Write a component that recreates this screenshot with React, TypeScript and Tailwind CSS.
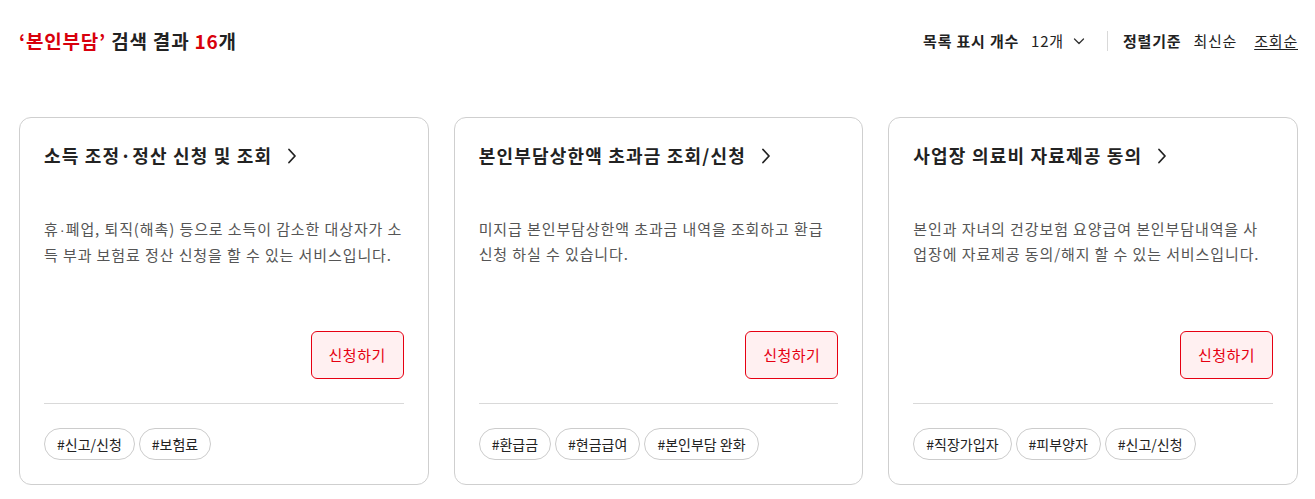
import React from 'react';

const font = { fontFamily: '"Noto Sans CJK KR", "Noto Sans", sans-serif' };

interface ServiceCardProps {
    title: string;
    desc: string[]; // lines, wrapped as on the live page
    tags: string[];
}

// the CJK font draws a full-width middle dot, so give it a latin one
const withDots = (text: string) =>
    text.split('·').map((part, i) => (
        <React.Fragment key={i}>
            {i > 0 && <span className="font-['Liberation_Sans'] tracking-normal px-[1px]">·</span>}
            {part}
        </React.Fragment>
    ));

const ServiceCard: React.FC<ServiceCardProps> = ({ title, desc, tags }) => {
    return (
        <div className="flex flex-col h-[368px] border border-[#cfcfcf] rounded-xl bg-white px-6 pt-6 pb-6">
            <h3 className="flex items-center text-[18px] leading-[27px] font-bold text-[#222] tracking-[1.2px]">
                {title}
                <svg className="ml-[13px]" width="14" height="16" viewBox="0 0 14 16" fill="none">
                    <path d="M4 1.5 L10 8 L4 14.5" stroke="#222" strokeWidth="1.8" strokeLinecap="round" strokeLinejoin="round" />
                </svg>
            </h3>
            <p className="mt-[47px] flex-1 text-[15px] leading-[25px] text-[#555] tracking-[0.9px]">
                {desc.map((line, i) => (
                    <span key={i} className="block whitespace-nowrap">
                        {withDots(line)}
                    </span>
                ))}
            </p>
            <div className="flex justify-end">
                <button className="w-[93px] h-[48px] rounded-md border border-[#e60012] bg-[#fff0f1] text-[15px] text-[#e60012] tracking-[0.5px]">
                    신청하기
                </button>
            </div>
            <div className="mt-6 border-t border-[#d9d9d9] pt-6 flex gap-1">
                {tags.map((t) => (
                    <span key={t} className="h-8 px-3 flex items-center rounded-full border border-[#cccccc] text-[14px] text-[#222]">
                        #{t}
                    </span>
                ))}
            </div>
        </div>
    );
};

const cards: ServiceCardProps[] = [
    {
        title: '소득 조정·정산 신청 및 조회',
        desc: ['휴·폐업, 퇴직(해촉) 등으로 소득이 감소한 대상자가 소', '득 부과 보험료 정산 신청을 할 수 있는 서비스입니다.'],
        tags: ['신고/신청', '보험료'],
    },
    {
        title: '본인부담상한액 초과금 조회/신청',
        desc: ['미지급 본인부담상한액 초과금 내역을 조회하고 환급', '신청 하실 수 있습니다.'],
        tags: ['환급금', '현금급여', '본인부담 완화'],
    },
    {
        title: '사업장 의료비 자료제공 동의',
        desc: ['본인과 자녀의 건강보험 요양급여 본인부담내역을 사', '업장에 자료제공 동의/해지 할 수 있는 서비스입니다.'],
        tags: ['직장가입자', '피부양자', '신고/신청'],
    },
];

export default function App() {
    return (
        <div className="w-[1315px] h-[499px] bg-white pl-[19px] pr-[17px] pt-[27px]" style={font}>
            <div className="flex items-center justify-between h-[28px]">
                <h2 className="text-[19px] font-bold text-[#222] tracking-[0.8px]">
                    <span className="text-[#d8000c]">‘본인부담’</span> 검색 결과 <span className="text-[#d8000c]">16</span>개
                </h2>
                <div className="flex items-center text-[15px] text-[#222] tracking-[0.8px]">
                    <span className="font-bold">목록 표시 개수</span>
                    <span className="ml-[12px] flex items-center">
                        12개
                        <svg className="ml-[9px]" width="12" height="12" viewBox="0 0 12 12" fill="none">
                            <path d="M1.5 4 L6 8.5 L10.5 4" stroke="#333" strokeWidth="1.3" strokeLinecap="round" strokeLinejoin="round" />
                        </svg>
                    </span>
                    <span className="ml-[22px] mr-[15px] w-px h-5 bg-[#d9d9d9]" />
                    <span className="font-bold">정렬기준</span>
                    <span className="ml-3">최신순</span>
                    <span className="ml-[17px] underline underline-offset-2">조회순</span>
                </div>
            </div>
            <div className="mt-[62px] grid grid-cols-3 gap-[25px]">
                {cards.map((c) => (
                    <ServiceCard key={c.title} {...c} />
                ))}
            </div>
        </div>
    );
}
